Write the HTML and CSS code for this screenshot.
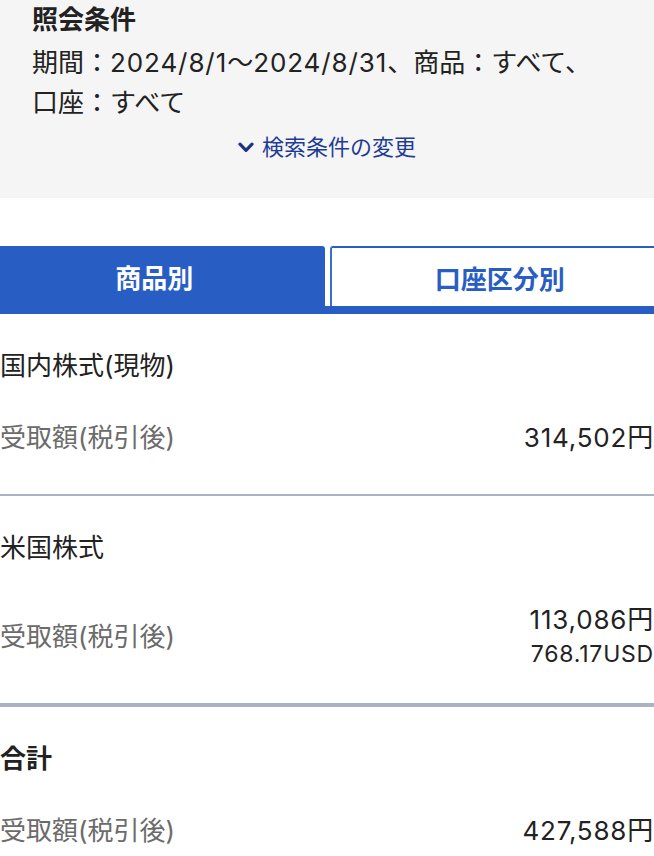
FILE: index.html
```html
<!DOCTYPE html>
<html lang="ja">
<head>
<meta charset="UTF-8" />
<meta name="viewport" content="width=device-width, initial-scale=1" />
<title>受取額照会</title>
<link rel="stylesheet" href="styles.css">
</head>
<body>

<!-- 照会条件 -->
<section class="conditions">
  <h2 class="conditions-title">照会条件</h2>
  <p class="conditions-text">期間：<span class="num">2024/8/1</span>～<span class="num">2024/8/31</span>、商品：すべて、<br>口座：すべて</p>
  <a class="conditions-link" href="#">
    <svg class="chevron" viewBox="0 0 16 11" width="16" height="11" aria-hidden="true">
      <path d="M2 2.2 L8 8.4 L14 2.2" fill="none" stroke="currentColor" stroke-width="3.2" stroke-linecap="round" stroke-linejoin="round"/>
    </svg>
    検索条件の変更
  </a>
</section>

<!-- タブ -->
<nav class="tabs">
  <a class="tab tab-active" href="#">商品別</a>
  <a class="tab" href="#">口座区分別</a>
</nav>

<!-- 一覧 -->
<main class="list">
  <div class="item">
    <div class="item-name">国内株式(現物)</div>
    <div class="item-row">
      <span class="item-label">受取額(税引後)</span>
      <span class="item-value">314,502円</span>
    </div>
  </div>

  <div class="item">
    <div class="item-name">米国株式</div>
    <div class="item-row">
      <span class="item-label">受取額(税引後)</span>
      <span class="item-value">113,086円<small>768.17USD</small></span>
    </div>
  </div>

  <div class="item item-total">
    <div class="item-name">合計</div>
    <div class="item-row">
      <span class="item-label">受取額(税引後)</span>
      <span class="item-value">427,588円</span>
    </div>
  </div>
</main>

</body>
</html>
```

FILE: styles.css
```css
/* Base */
* {
  box-sizing: border-box;
}
body {
  margin: 0;
  font-family: Inter, "Noto Sans CJK JP", sans-serif;
  color: #222;
  background: #fff;
  overflow: hidden;
}

/* Conditions box */
.conditions {
  background: #f5f5f5;
  padding: 0 32px 36px;
}
.conditions-title {
  margin: 0 0 3px;
  font-size: 26px;
  line-height: 40px;
  font-weight: 700;
}
.conditions-text {
  margin: 0;
  font-size: 26px;
  line-height: 40px;
}
.num {
  letter-spacing: 0.9px;
}
.conditions-link {
  display: flex;
  align-items: center;
  justify-content: center;
  gap: 8px;
  margin-top: 9px;
  font-size: 22px;
  line-height: 30px;
  color: #1f3c94;
  text-decoration: none;
}
.chevron {
  display: block;
  color: #1c3580;
}

/* Tabs */
.tabs {
  display: grid;
  grid-template-columns: 1fr 1fr;
  column-gap: 5px;
  margin: 48px -16px 0;
  border-bottom: 8px solid #285ec4;
}
.tab {
  height: 60px;
  display: flex;
  align-items: center;
  justify-content: center;
  font-size: 26px;
  font-weight: 700;
  color: #285ec4;
  text-decoration: none;
  background: #fff;
  border: 2px solid #285ec4;
  border-left-color: #3a6fd0;
  border-bottom: none;
  border-radius: 3px 3px 0 0;
}
.tab-active {
  color: #fff;
  background: #285ec4;
  border: none;
}

/* List */
.item {
  padding: 34px 0 38px;
  border-bottom: 2px solid #a9b3c5;
}
.item:nth-child(2) {
  border-bottom-width: 4px;
  padding-bottom: 32px;
}
.item-total {
  border-bottom: none;
}
.item-name {
  font-size: 26px;
  line-height: 36px;
}
.item-total .item-name {
  font-weight: 700;
}
.item-row {
  display: flex;
  justify-content: space-between;
  align-items: center;
  margin-top: 36px;
}
.item-label {
  font-size: 26px;
  line-height: 36px;
  color: #6b6b6b;
}
.item-value {
  display: flex;
  flex-direction: column;
  align-items: flex-end;
  font-size: 26px;
  line-height: 36px;
  letter-spacing: 0.8px;
}
.item-value small {
  font-size: 23px;
  line-height: 33px;
  letter-spacing: 0.8px;
}
```
